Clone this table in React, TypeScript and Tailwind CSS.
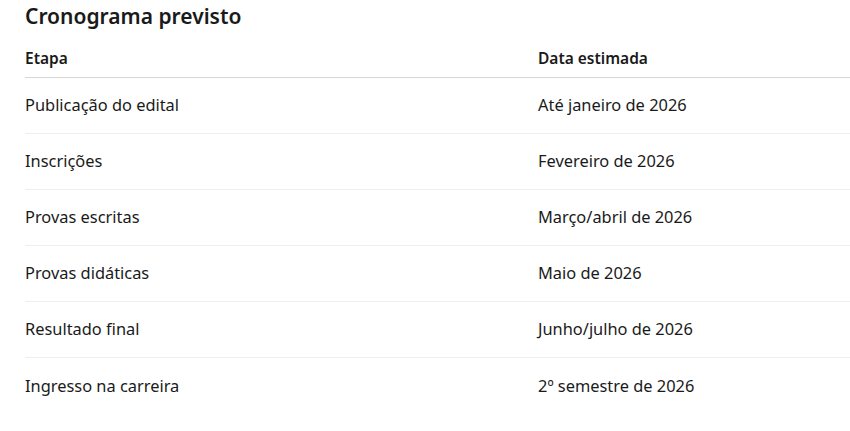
const rows: [string, string][] = [
  ['Publicação do edital', 'Até janeiro de 2026'],
  ['Inscrições', 'Fevereiro de 2026'],
  ['Provas escritas', 'Março/abril de 2026'],
  ['Provas didáticas', 'Maio de 2026'],
  ['Resultado final', 'Junho/julho de 2026'],
  ['Ingresso na carreira', '2º semestre de 2026'],
];

export default function App() {
  return (
    <div className="min-h-[431px] bg-white pl-[25px] text-[#1a1a1a] font-['Noto_Sans',sans-serif]">
      <h2 className="pt-[2px] text-[21px] font-semibold leading-[28px]">Cronograma previsto</h2>

      <div className="mt-[10px]">
        <div className="grid grid-cols-[513px_1fr] border-b border-[#d6d6d6] h-[38px] items-center text-[15.5px] font-semibold">
          <div>Etapa</div>
          <div>Data estimada</div>
        </div>
        {rows.map(([etapa, data], i) => (
          <div
            key={etapa}
            className={
              'grid grid-cols-[513px_1fr] h-[56px] items-center text-[16.4px] ' +
              (i < rows.length - 1 ? 'border-b border-[#eeeeee]' : '')
            }
          >
            <div>{etapa}</div>
            <div>{data}</div>
          </div>
        ))}
      </div>
    </div>
  );
}
